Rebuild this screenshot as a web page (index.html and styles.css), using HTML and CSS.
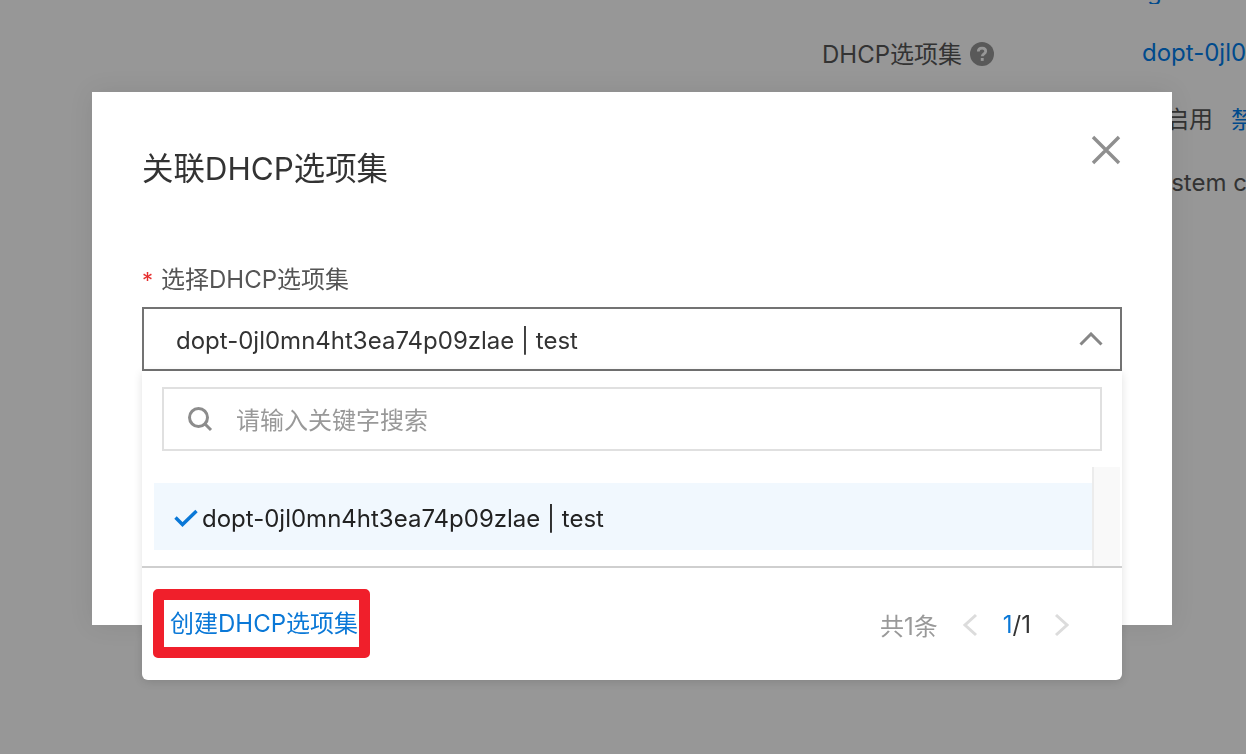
FILE: index.html
```html
<!DOCTYPE html>
<html lang="zh-CN">
	<head>
		<meta charset="UTF-8">
		<title>关联DHCP选项集</title>
		<link rel="stylesheet" href="styles.css">
	</head>
	<body>
		<div class="page">
			<div class="row row-top"><span class="row-value link">g</span></div>
			<div class="row row-dhcp">
				<span class="row-label">DHCP选项集
					<svg class="help" width="24" height="24" viewBox="0 0 24 24"><circle cx="12" cy="12" r="12" fill="#595959"/><path d="M8.300 9.600c0-2.200 1.600-3.500 3.800-3.500s3.600 1.300 3.600 3.100c0 2.700-3.400 2.600-3.400 5.100" fill="none" stroke="#979797" stroke-width="2.800"/><rect x="10.800" y="16" width="2.900" height="2.900" fill="#979797"/></svg>
				</span>
				<span class="row-value link">dopt-0jl0mn4ht3ea74p09zlae</span>
			</div>
			<div class="row row-state"><span class="row-label state">启用</span><span class="link">禁用</span></div>
			<div class="row row-sys"><span>system c</span></div>
		</div>
		<div class="mask">
			<div class="modal">
				<div class="modal-head">
					<h3 class="modal-title">关联DHCP选项集</h3>
					<svg class="close" width="30" height="30" viewBox="0 0 30 30"><path d="M2 2l26 26M28 2L2 28" stroke="#8f8f8f" stroke-width="3.400" fill="none"/></svg>
				</div>
				<div class="field-label"><span class="required">*</span>选择DHCP选项集</div>
				<div class="select">
					<div class="select-box">
						<span class="select-text">dopt-0jl0mn4ht3ea74p09zlae | test</span>
						<svg width="24" height="14" viewBox="0 0 24 14"><path d="M1.500 12.500L12 2l10.500 10.500" stroke="#868686" stroke-width="3" fill="none"/></svg>
					</div>
					<div class="dropdown">
						<div class="search">
							<svg width="26" height="26" viewBox="0 0 26 26"><circle cx="11.500" cy="11.500" r="9" stroke="#8c8c8c" stroke-width="3" fill="none"/><path d="M18 18l6 6" stroke="#8c8c8c" stroke-width="3"/></svg>
							<span class="placeholder">请输入关键字搜索</span>
						</div>
						<div class="list">
							<div class="list-body">
								<div class="option">
									<svg width="24" height="18" viewBox="0 0 24 18"><path d="M1.500 8.500l7 7L22.500 2" stroke="#0a78d7" stroke-width="3.400" fill="none"/></svg>
									<span>dopt-0jl0mn4ht3ea74p09zlae | test</span>
								</div>
							</div>
							<div class="scrollbar"></div>
						</div>
						<div class="foot">
							<a class="create">创建DHCP选项集</a>
							<div class="pager">
								<span class="total">共1条</span>
								<svg width="16" height="24" viewBox="0 0 16 24"><path d="M14 2L3 12l11 10" stroke="#dcdcdc" stroke-width="3" fill="none"/></svg>
								<span class="pages"><b>1</b>/1</span>
								<svg width="16" height="24" viewBox="0 0 16 24"><path d="M2 2l11 10L2 22" stroke="#dcdcdc" stroke-width="3" fill="none"/></svg>
							</div>
						</div>
					</div>
				</div>
			</div>
		</div>
	</body>
</html>
```

FILE: styles.css
```css
html, body {
	margin: 0;
	height: 100%;
	overflow: hidden;
}
body {
	background: #979797;
	color: #333;
	font-family: Inter, "Noto Sans CJK SC", sans-serif;
	font-size: 24px;
}
.page {
	height: 754px;
	overflow: hidden;
	padding-left: 822px;
	box-sizing: border-box;
}
.row {
	display: flex;
	align-items: center;
	white-space: nowrap;
}
.row-top {
	height: 4px;
	overflow: hidden;
	padding-left: 325px;
	margin-bottom: 30px;
	align-items: flex-end;
}
.row-top .row-value {
	line-height: 24px;
	margin-top: -20px;
}
.row-dhcp {
	height: 36px;
}
.row-label {
	width: 320px;
	flex: none;
	color: #333;
	display: flex;
	align-items: center;
	gap: 8px;
}
.help {
	margin-top: 3px;
}
.link {
	color: #004a8c;
}
.row-state {
	margin-top: 30px;
	height: 34px;
	padding-left: 343px;
}
.row-state .state {
	width: 66px;
}
.row-sys {
	margin-top: 31px;
	height: 34px;
	padding-left: 323px;
}

.mask {
	position: fixed;
	left: 92px;
	top: 92px;
}
.modal {
	width: 1080px;
	height: 533px;
	box-sizing: border-box;
	background: #fff;
	box-shadow: 0 0 24px rgba(0, 0, 0, 0.08);
	padding: 40px 50px 0;
}
.modal-head {
	display: flex;
	justify-content: space-between;
	align-items: flex-start;
	height: 135px;
}
.modal-title {
	margin: 0;
	font-size: 31.400px;
	font-weight: 400;
	line-height: 74px;
	height: 74px;
	color: #333;
}
.close {
	margin: 3px 1px 0 0;
}
.field-label {
	font-size: 24px;
	line-height: 26px;
	color: #555;
	height: 40px;
}
.required {
	font-size: 22px;
	color: #e62e2e;
	margin-right: 8px;
}
.select {
	position: relative;
}
.select-box {
	height: 64px;
	box-sizing: border-box;
	border: 2px solid #737373;
	padding: 0 17px 0 32px;
	display: flex;
	align-items: center;
	justify-content: space-between;
	color: #333;
}
.select-text {
	padding-top: 2px;
}
.dropdown {
	position: absolute;
	left: 0;
	right: 0;
	top: 64px;
	height: 309px;
	background: #fff;
	border-radius: 0 0 6px 6px;
	box-shadow: 0 2px 10px rgba(0, 0, 0, 0.12);
	padding-top: 16px;
	box-sizing: border-box;
}
.search {
	margin: 0 20px;
	height: 64px;
	box-sizing: border-box;
	border: 2px solid #e0e0e0;
	display: flex;
	align-items: center;
	padding-left: 23px;
	gap: 23px;
}
.placeholder {
	color: #999;
	margin-bottom: 2px;
}
.list {
	display: flex;
	margin-top: 16px;
	height: 99px;
	border-bottom: 2px solid #cfcfcf;
}
.list-body {
	flex: 1;
	padding: 16px 0 0 12px;
}
.option {
	height: 67px;
	box-sizing: border-box;
	padding: 4px 0 0 20px;
	background: #f1f8fe;
	display: flex;
	align-items: center;
	gap: 4px;
	color: #222;
}
.option svg {
	margin-top: -2px;
}
.scrollbar {
	width: 28px;
	margin-right: 2px;
	box-sizing: border-box;
	background: #f9f9f9;
	border-left: 2px solid #ececec;
}
.foot {
	display: flex;
	justify-content: space-between;
	align-items: center;
	height: 111px;
	padding: 0 52px 0 11px;
}
.create {
	display: block;
	border: 11px solid #f01f2b;
	border-radius: 5px;
	padding-left: 6px;
	width: 189px;
	height: 47px;
	line-height: 47px;
	color: #0a78d7;
	white-space: nowrap;
	overflow: hidden;
}
.pager {
	display: flex;
	align-items: center;
	margin-top: 2px;
	color: #333;
}
.total {
	color: #999;
	margin-right: 24px;
}
.pages {
	margin: 0 23px 0 25px;
}
.pages b {
	font-weight: 400;
	color: #0a78d7;
}
```
